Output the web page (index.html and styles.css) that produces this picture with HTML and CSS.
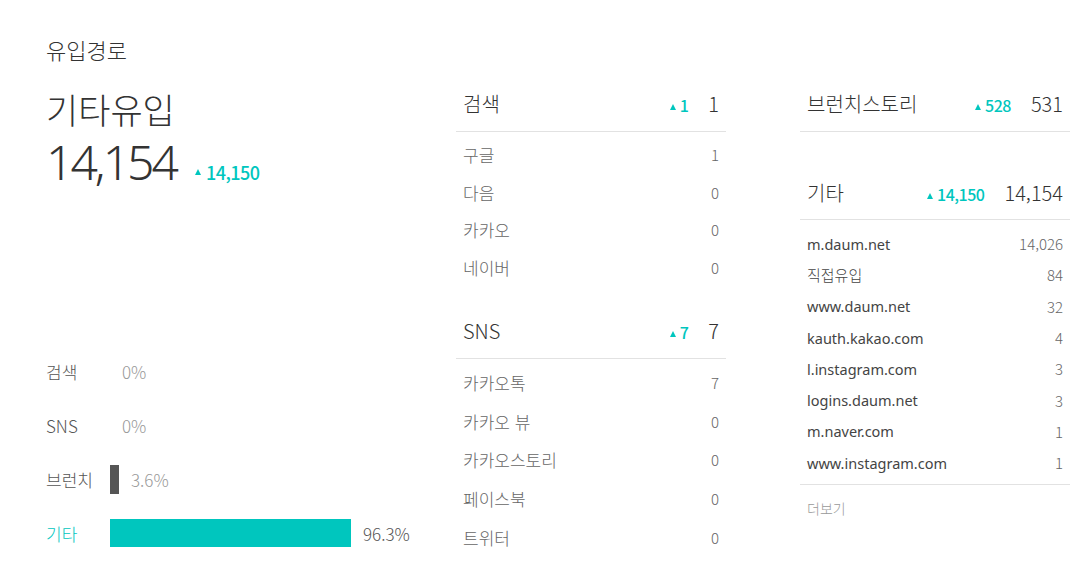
FILE: index.html
```html
<!DOCTYPE html>
<html lang="ko">
<head>
<meta charset="utf-8">
<link rel="stylesheet" href="styles.css">
</head>
<body>
<div class="page">
  <h1 class="title">유입경로</h1>
  <div class="columns">
    <section class="summary">
      <div class="sum-name">기타유입</div>
      <div class="sum-total">
        <span class="big">14,154</span>
        <span class="delta lg">14,150</span>
      </div>
      <div class="bars">
        <div class="bar-row"><span class="bar-label">검색</span><span class="bar" style="width:0"></span><span class="bar-pct">0%</span></div>
        <div class="bar-row"><span class="bar-label">SNS</span><span class="bar" style="width:0"></span><span class="bar-pct">0%</span></div>
        <div class="bar-row"><span class="bar-label">브런치</span><span class="bar bar-dark" style="width:9px"></span><span class="bar-pct">3.6%</span></div>
        <div class="bar-row active"><span class="bar-label">기타</span><span class="bar bar-teal" style="width:241px"></span><span class="bar-pct">96.3%</span></div>
      </div>
    </section>

    <section class="col">
      <div class="group">
        <div class="head"><span class="head-name">검색</span><span class="delta sm">1</span><span class="head-num">1</span></div>
        <ul class="list list-mid">
          <li><span>구글</span><span class="num">1</span></li>
          <li><span>다음</span><span class="num">0</span></li>
          <li><span>카카오</span><span class="num">0</span></li>
          <li><span>네이버</span><span class="num">0</span></li>
        </ul>
      </div>
      <div class="group">
        <div class="head"><span class="head-name">SNS</span><span class="delta sm">7</span><span class="head-num">7</span></div>
        <ul class="list list-mid list-sns">
          <li><span>카카오톡</span><span class="num">7</span></li>
          <li><span>카카오 뷰</span><span class="num">0</span></li>
          <li><span>카카오스토리</span><span class="num">0</span></li>
          <li><span>페이스북</span><span class="num">0</span></li>
          <li><span>트위터</span><span class="num">0</span></li>
        </ul>
      </div>
    </section>

    <section class="col col-right">
      <div class="group">
        <div class="head"><span class="head-name">브런치스토리</span><span class="delta sm">528</span><span class="head-num">531</span></div>
      </div>
      <div class="group group-etc">
        <div class="head"><span class="head-name">기타</span><span class="delta sm">14,150</span><span class="head-num">14,154</span></div>
        <ul class="list list-right">
          <li><span class="latin">m.daum.net</span><span class="num">14,026</span></li>
          <li><span>직접유입</span><span class="num">84</span></li>
          <li><span class="latin">www.daum.net</span><span class="num">32</span></li>
          <li><span class="latin">kauth.kakao.com</span><span class="num">4</span></li>
          <li><span class="latin">l.instagram.com</span><span class="num">3</span></li>
          <li><span class="latin">logins.daum.net</span><span class="num">3</span></li>
          <li><span class="latin">m.naver.com</span><span class="num">1</span></li>
          <li><span class="latin">www.instagram.com</span><span class="num">1</span></li>
        </ul>
        <div class="more">더보기</div>
      </div>
    </section>
  </div>
</div>
</body>
</html>
```

FILE: styles.css
```css
* { box-sizing: border-box; }
html, body { margin: 0; padding: 0; background: #fff; }
body {
  font-family: "Noto Sans CJK KR", "Noto Sans", sans-serif;
  font-weight: 300;
  color: #333;
}
.page { padding: 35px 0 0 46px; }
.title {
  margin: 0;
  height: 28px;
  font-size: 22px;
  line-height: 28px;
  font-weight: 300;
  color: #333;
}
.columns {
  display: flex;
  margin-top: 25px;
}
.summary { width: 410px; }
.sum-name {
  height: 42px;
  font-size: 35px;
  line-height: 42px;
  color: #333;
}
.sum-total {
  display: flex;
  align-items: baseline;
  height: 60px;
  margin-top: 4px;
}
.big {
  font-family: "Noto Sans", "Open Sans", sans-serif;
  font-weight: 300;
  font-size: 48px;
  line-height: 56px;
  letter-spacing: -3px;
  color: #333;
}
.delta {
  font-family: "Noto Sans CJK KR", sans-serif;
  font-weight: 500;
  color: #00c6be;
  letter-spacing: -0.5px;
  white-space: nowrap;
}
.delta::before {
  content: "";
  display: inline-block;
  width: 0;
  height: 0;
  border-left: 3.5px solid transparent;
  border-right: 3.5px solid transparent;
  border-bottom: 6px solid #00c6be;
  margin-right: 4px;
}
.delta.lg { font-size: 18px; margin-left: 19px; }
.delta.lg::before { vertical-align: 5px; margin-right: 5px; }
.delta.sm { font-size: 16px; margin-left: auto; }
.delta.sm::before { vertical-align: 2px; }
.bars { margin-top: 150px; }
.bar-row {
  display: flex;
  align-items: center;
  height: 54px;
  font-size: 17px;
}
.bar-label { width: 64px; color: #555; }
.bar-row.active .bar-label { color: #00c6be; }
.bar { display: block; height: 29px; margin-right: 12px; }
.bar-dark { background: #555; }
.bar-teal { background: #00c6be; height: 28px; }
.bar-pct { color: #999; }
.bar-row.active .bar-pct { color: #555; }
.col { width: 270px; }
.col-right { margin-left: 74px; }
.group + .group { margin-top: 29px; }
.col-right .group + .group { margin-top: 45px; }
.head {
  display: flex;
  align-items: baseline;
  height: 44px;
  padding: 0 7px;
  line-height: 32px;
  border-bottom: 1px solid #e2e2e2;
}
.col-right .group-etc .head { height: 43px; }
.head-name { font-size: 20px; color: #333; }
.head-num {
  font-size: 20px;
  margin-left: 20px;
  color: #333;
}
.list { list-style: none; margin: 0; padding: 4px 7px 0; }
.list li {
  display: flex;
  justify-content: space-between;
  align-items: center;
  height: 37.5px;
  font-size: 17px;
  color: #666;
}
.list-sns li { height: 38.75px; }
.num { font-size: 15px; color: #666; }
.list-right { padding: 8px 7px 6px; border-bottom: 1px solid #e2e2e2; }
.list-right li { height: 31.3px; font-size: 15px; color: #444; }
.list-right .latin { font-family: "Noto Sans", sans-serif; font-weight: 400; font-size: 14.5px; }
.more { padding: 13px 7px 0; font-size: 14px; color: #999; }
```
